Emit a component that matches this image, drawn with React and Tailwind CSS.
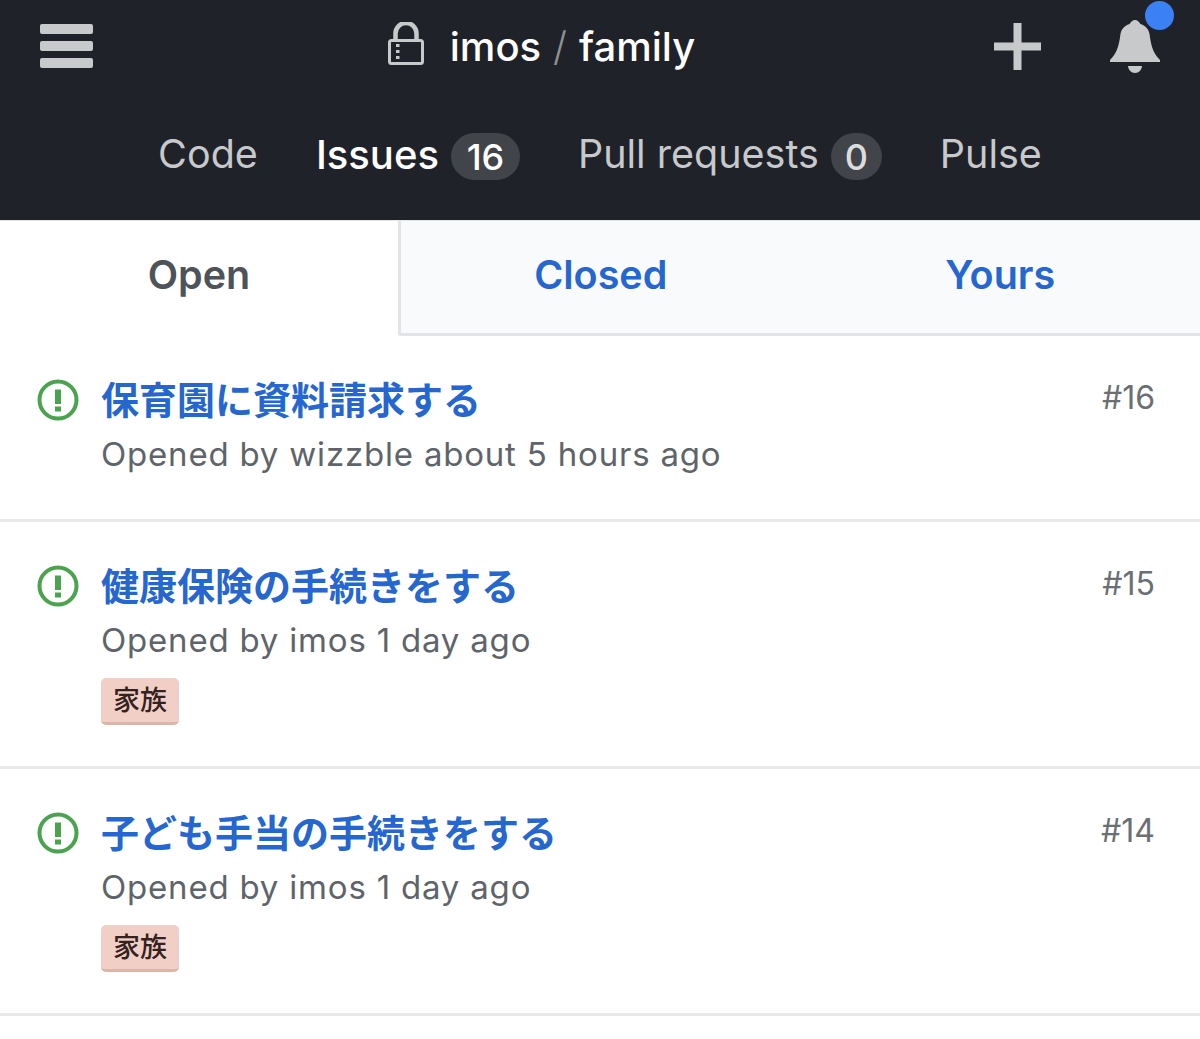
import React from "react";

const font = { fontFamily: '"Inter", "Noto Sans CJK JP", sans-serif' };

const issues = [
  { id: 16, title: "保育園に資料請求する", by: "wizzble", when: "about 5 hours ago" },
  { id: 15, title: "健康保険の手続きをする", by: "imos", when: "1 day ago", label: "家族" },
  { id: 14, title: "子ども手当の手続きをする", by: "imos", when: "1 day ago", label: "家族" },
];

function LockIcon() {
  return (
    <svg className="-translate-y-[4px]" width="36" height="43" viewBox="0 0 36 43" fill="none">
      <path d="M7.500 18V11.500a10.500 10.500 0 0 1 21 0V18" stroke="#c8c9cb" strokeWidth="4.500" />
      <rect x="1.500" y="18.500" width="33" height="23" rx="2" stroke="#c8c9cb" strokeWidth="3" />
      <rect x="8" y="22" width="3.500" height="3" fill="#c8c9cb" />
      <rect x="8" y="28" width="3.500" height="3" fill="#c8c9cb" />
      <rect x="8" y="34" width="3.500" height="3" fill="#c8c9cb" />
    </svg>
  );
}

function BellIcon() {
  return (
    <svg width="50" height="53" viewBox="0 0 50 53" fill="#c8c9cb">
      <path d="M25 0C27.500 0 29 2 30.500 4C36 6 38.500 9 39.500 14C41 24 42 32 50 40V42H0V40C8 32 9 24 10.500 14C11.500 9 14 6 19.500 4C21 2 22.500 0 25 0Z" />
      <path d="M18 46H32C31.500 50 29 53 25 53C21 53 18.500 50 18 46Z" />
    </svg>
  );
}

function IssueIcon() {
  return (
    <svg width="42" height="42" viewBox="0 0 42 42" fill="none">
      <circle cx="21" cy="21" r="18.500" stroke="#4ba24f" strokeWidth="4" />
      <rect x="18" y="10.500" width="6" height="14.500" fill="#4ba24f" />
      <rect x="18" y="27.500" width="6" height="5" fill="#4ba24f" />
    </svg>
  );
}

function IssueRow({ issue }) {
  return (
    <div className="flex items-start border-b-[3px] border-[#e8e9eb] pl-[37px] pr-[45px] pt-[43px]">
      <div className="w-[64px] shrink-0">
        <IssueIcon />
      </div>
      <div className={`min-w-0 flex-1 ${issue.label ? "pb-[41px]" : "pb-[45px]"}`}>
        <p className="h-[42px] text-[38px] leading-[42px] font-bold text-[#2566cf]">{issue.title}</p>
        <p className="mt-[13px] h-[40px] text-[33px] leading-[40px] tracking-[0.8px] text-[#5e6469]">
          Opened by {issue.by} {issue.when}
        </p>
        {issue.label && (
          <span className="mt-[18px] flex h-[47px] w-[78px] items-center justify-center rounded-[5px] border-b-[3px] border-[#dcb5aa] bg-[#f2cfc6] pt-[3px] text-[27px] font-medium text-[#33221d]">
            {issue.label}
          </span>
        )}
      </div>
      <span className="-mt-[2px] text-[32px] leading-[42px] text-[#6a6f74]">#{issue.id}</span>
    </div>
  );
}

export default function App() {
  return (
    <div style={font} className="min-h-[1039px] overflow-hidden bg-white">
      <header className="h-[221px] border-b border-[#e5e5e5] bg-[#1f2228]">
        <div className="flex h-[92px] items-center justify-between pl-10 pr-10">
          <div className="flex w-[53px] flex-col gap-[7px]">
            <div className="h-[10px] rounded-[2px] bg-[#c8c9cb]" />
            <div className="h-[10px] rounded-[2px] bg-[#c8c9cb]" />
            <div className="h-[10px] rounded-[2px] bg-[#c8c9cb]" />
          </div>
          <div className="flex items-center pr-[4px] pt-[2px]">
            <LockIcon />
            <span className="ml-[26px] text-[40px] leading-none font-medium text-white">imos</span>
            <span className="mx-[12px] text-[40px] leading-none font-light text-[#8f9194]">/</span>
            <span className="text-[40px] leading-none font-medium text-white">family</span>
          </div>
          <div className="flex items-center">
            <svg width="47" height="47" viewBox="0 0 47 47" fill="#c8c9cb">
              <rect x="19.500" y="0" width="8" height="47" />
              <rect x="0" y="19.500" width="47" height="8" />
            </svg>
            <div className="relative ml-[69px]">
              <BellIcon />
              <span className="absolute -top-[19px] left-[35px] h-[29px] w-[29px] rounded-full bg-[#3c80f6]" />
            </div>
          </div>
        </div>
        <nav className="flex items-center justify-center pt-[33px] text-[39.500px] text-[#c8c9cb]">
          <span>Code</span>
          <span className="ml-[58px] text-[40px] font-medium text-white">Issues</span>
          <span className="ml-[12px] mt-[3px] flex h-[47px] w-[69px] items-center justify-center rounded-full bg-[#414449] text-[36px] font-medium text-white">16</span>
          <span className="ml-[58px]">Pull requests</span>
          <span className="ml-[12px] mt-[3px] flex h-[47px] w-[51px] items-center justify-center rounded-full bg-[#414449] text-[36px] font-medium text-[#dcdcdd]">0</span>
          <span className="ml-[58px]">Pulse</span>
        </nav>
      </header>
      <div className="grid h-[115px] grid-cols-[398px_1fr] text-[39.500px] font-semibold">
        <div className="flex items-center justify-center pb-[5px] text-[#4d5358]">Open</div>
        <div className="grid grid-cols-2 rounded-bl-[3px] border-b-[3px] border-l-[3px] border-[#e2e3e6] bg-[#f9fafc] text-[#2566cf]">
          <div className="flex items-center justify-center pb-[2px]">Closed</div>
          <div className="flex items-center justify-center pb-[2px]">Yours</div>
        </div>
      </div>
      {issues.map((issue) => (
        <IssueRow key={issue.id} issue={issue} />
      ))}
    </div>
  );
}
